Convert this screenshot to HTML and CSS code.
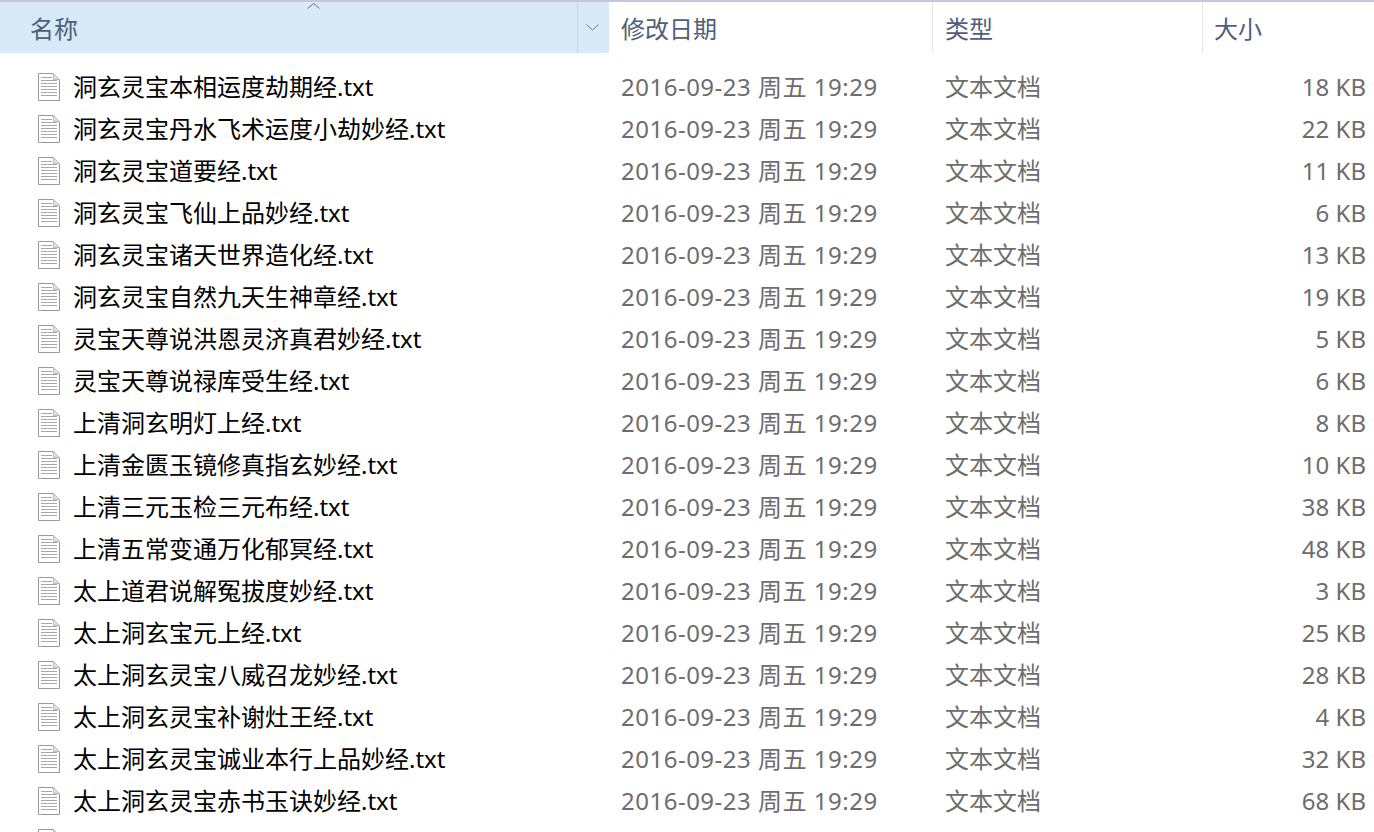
FILE: index.html
```html
<!DOCTYPE html>
<html lang="zh-CN">
<head>
<meta charset="utf-8">
<title>文件列表</title>
<link rel="stylesheet" href="styles.css">
</head>
<body>
<svg class="defs" width="0" height="0" aria-hidden="true">
  <symbol id="txt" viewBox="0 0 22 28">
    <path d="M.5.5H15.5L21.5 6.5V27.5H.5Z" fill="#fff" stroke="#999"/>
    <path d="M15.5.5V6.5H21.5Z" fill="#e0e0e0" stroke="#bcbcbc"/>
    <path d="M3 4.5H14M3 7.5H19M3 10.5H19M3 13.5H19M3 16.5H19M3 19.5H19M3 22.5H19" stroke="#a8a8a8" fill="none"/>
  </symbol>
</svg>
<div class="window">
  <div class="header">
    <div class="col-head col-name active">
      <span class="head-label">名称</span>
      <svg class="sort" width="13" height="6" viewBox="0 0 13 6"><path d="M.5 5.5 6.5 .5 12.5 5.5" fill="none" stroke="#6a6a6a"/></svg>
      <span class="drop"><svg width="13" height="7" viewBox="0 0 13 7"><path d="M.5 .5 6.5 6 12.5 .5" fill="none" stroke="#6f7a85"/></svg></span>
    </div>
    <div class="col-head col-date"><span class="head-label">修改日期</span></div>
    <div class="col-head col-type"><span class="head-label">类型</span></div>
    <div class="col-head col-size"><span class="head-label">大小</span></div>
  </div>
  <div class="list">
    <div class="row"><div class="name"><svg class="icon"><use href="#txt"/></svg>洞玄灵宝本相运度劫期经.txt</div><div class="date">2016-09-23 周五 19:29</div><div class="type">文本文档</div><div class="size">18 KB</div></div>
    <div class="row"><div class="name"><svg class="icon"><use href="#txt"/></svg>洞玄灵宝丹水飞术运度小劫妙经.txt</div><div class="date">2016-09-23 周五 19:29</div><div class="type">文本文档</div><div class="size">22 KB</div></div>
    <div class="row"><div class="name"><svg class="icon"><use href="#txt"/></svg>洞玄灵宝道要经.txt</div><div class="date">2016-09-23 周五 19:29</div><div class="type">文本文档</div><div class="size">11 KB</div></div>
    <div class="row"><div class="name"><svg class="icon"><use href="#txt"/></svg>洞玄灵宝飞仙上品妙经.txt</div><div class="date">2016-09-23 周五 19:29</div><div class="type">文本文档</div><div class="size">6 KB</div></div>
    <div class="row"><div class="name"><svg class="icon"><use href="#txt"/></svg>洞玄灵宝诸天世界造化经.txt</div><div class="date">2016-09-23 周五 19:29</div><div class="type">文本文档</div><div class="size">13 KB</div></div>
    <div class="row"><div class="name"><svg class="icon"><use href="#txt"/></svg>洞玄灵宝自然九天生神章经.txt</div><div class="date">2016-09-23 周五 19:29</div><div class="type">文本文档</div><div class="size">19 KB</div></div>
    <div class="row"><div class="name"><svg class="icon"><use href="#txt"/></svg>灵宝天尊说洪恩灵济真君妙经.txt</div><div class="date">2016-09-23 周五 19:29</div><div class="type">文本文档</div><div class="size">5 KB</div></div>
    <div class="row"><div class="name"><svg class="icon"><use href="#txt"/></svg>灵宝天尊说禄库受生经.txt</div><div class="date">2016-09-23 周五 19:29</div><div class="type">文本文档</div><div class="size">6 KB</div></div>
    <div class="row"><div class="name"><svg class="icon"><use href="#txt"/></svg>上清洞玄明灯上经.txt</div><div class="date">2016-09-23 周五 19:29</div><div class="type">文本文档</div><div class="size">8 KB</div></div>
    <div class="row"><div class="name"><svg class="icon"><use href="#txt"/></svg>上清金匮玉镜修真指玄妙经.txt</div><div class="date">2016-09-23 周五 19:29</div><div class="type">文本文档</div><div class="size">10 KB</div></div>
    <div class="row"><div class="name"><svg class="icon"><use href="#txt"/></svg>上清三元玉检三元布经.txt</div><div class="date">2016-09-23 周五 19:29</div><div class="type">文本文档</div><div class="size">38 KB</div></div>
    <div class="row"><div class="name"><svg class="icon"><use href="#txt"/></svg>上清五常变通万化郁冥经.txt</div><div class="date">2016-09-23 周五 19:29</div><div class="type">文本文档</div><div class="size">48 KB</div></div>
    <div class="row"><div class="name"><svg class="icon"><use href="#txt"/></svg>太上道君说解冤拔度妙经.txt</div><div class="date">2016-09-23 周五 19:29</div><div class="type">文本文档</div><div class="size">3 KB</div></div>
    <div class="row"><div class="name"><svg class="icon"><use href="#txt"/></svg>太上洞玄宝元上经.txt</div><div class="date">2016-09-23 周五 19:29</div><div class="type">文本文档</div><div class="size">25 KB</div></div>
    <div class="row"><div class="name"><svg class="icon"><use href="#txt"/></svg>太上洞玄灵宝八威召龙妙经.txt</div><div class="date">2016-09-23 周五 19:29</div><div class="type">文本文档</div><div class="size">28 KB</div></div>
    <div class="row"><div class="name"><svg class="icon"><use href="#txt"/></svg>太上洞玄灵宝补谢灶王经.txt</div><div class="date">2016-09-23 周五 19:29</div><div class="type">文本文档</div><div class="size">4 KB</div></div>
    <div class="row"><div class="name"><svg class="icon"><use href="#txt"/></svg>太上洞玄灵宝诚业本行上品妙经.txt</div><div class="date">2016-09-23 周五 19:29</div><div class="type">文本文档</div><div class="size">32 KB</div></div>
    <div class="row"><div class="name"><svg class="icon"><use href="#txt"/></svg>太上洞玄灵宝赤书玉诀妙经.txt</div><div class="date">2016-09-23 周五 19:29</div><div class="type">文本文档</div><div class="size">68 KB</div></div>
    <div class="row"><div class="name"><svg class="icon"><use href="#txt"/></svg></div></div>
  </div>
</div>
</body>
</html>
```
FILE: styles.css
```css
* { box-sizing: border-box; }
html, body { margin: 0; height: 100%; overflow: hidden; background: #fff; }
body {
  font-family: "Noto Sans", "Noto Sans CJK SC", sans-serif;
  font-size: 24px;
}
.defs { position: absolute; }
.window { width: 1374px; height: 832px; overflow: hidden; border-top: 2px solid #c8c6dc; }
.header { display: flex; height: 51px; color: #4c607a; }
.col-head { display: flex; align-items: center; }
.head-label { display: block; }
.col-name {
  position: relative;
  width: 609px;
  padding-left: 30px;
  background: #d8e9f8;
  border-radius: 0 0 2px 0;
}
.sort { position: absolute; left: 307px; top: 1px; }
.drop {
  position: absolute;
  right: 0;
  top: 0;
  bottom: 0;
  width: 32px;
  padding-right: 3px;
  display: flex;
  align-items: center;
  justify-content: center;
  border-left: 1px solid #c2d3e3;
}
.col-date { width: 324px; padding-left: 12px; border-right: 1px solid #e5e5e5; }
.col-type { width: 270px; padding-left: 12px; border-right: 1px solid #e5e5e5; }
.col-size { flex: 1; padding-left: 11px; }
.list { padding-top: 13px; }
.row {
  display: grid;
  grid-template-columns: 609px 324px 261px 172px;
  height: 42px;
  line-height: 42px;
  color: #6d6d6d;
}
.name { display: flex; align-items: center; padding-left: 38px; color: #000; white-space: nowrap; }
.icon { width: 22px; height: 28px; margin-right: 13px; flex: none; }
.date { padding-left: 12px; white-space: nowrap; letter-spacing: 0.5px; }
.type { padding-left: 12px; }
.size { text-align: right; }
```
